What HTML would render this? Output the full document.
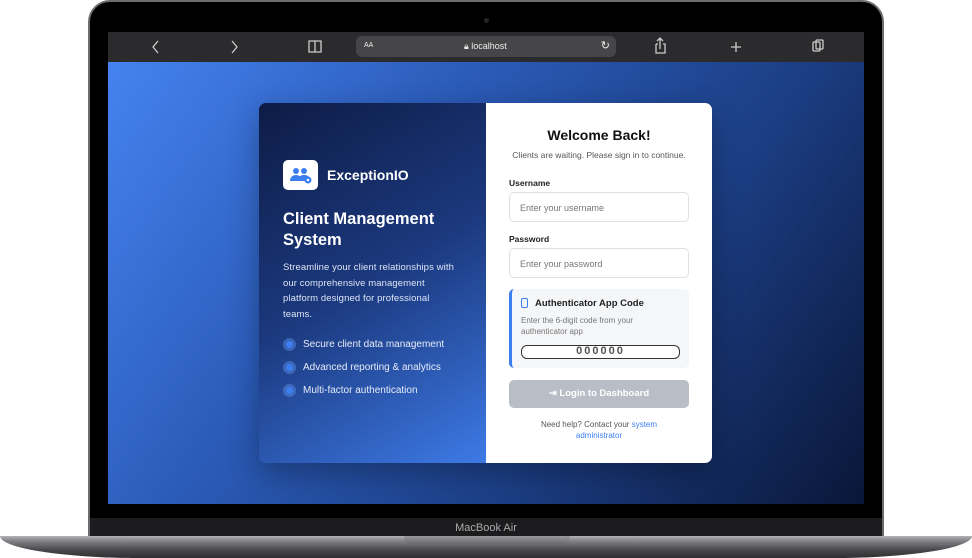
<!DOCTYPE html>
<html><head><style>
*{margin:0;padding:0;box-sizing:border-box}
body{width:972px;height:558px;background:#fff;position:relative;overflow:hidden;font-family:"Liberation Sans",sans-serif}
.lid{position:absolute;left:88px;top:0;width:796px;height:540px;background:#000;border-radius:22px 22px 0 0;border:2px solid #6c6c70}
.cam{position:absolute;left:484px;top:18px;width:5px;height:5px;border-radius:50%;background:#222}
.bar{position:absolute;left:108px;top:32px;width:756px;height:30px;background:#2b2b2d;color:#ddd}
.url{position:absolute;left:248px;top:4px;width:260px;height:21px;background:#464648;border-radius:6px;font-size:9px;color:#eee}
.screen{position:absolute;left:108px;top:62px;width:756px;height:442px;background:linear-gradient(125deg,#4583f0 0%,#2b5bb8 35%,#1c3f86 65%,#0a1638 100%)}
.chin{position:absolute;left:90px;top:518px;width:792px;height:20px;background:#1c1c1e;color:#aaa;font-size:11px;text-align:center;line-height:20px}
.base{position:absolute;left:0;top:536px;width:972px;height:22px;background:linear-gradient(#b4b4b8 0,#8a8a8e 4px,#4c4c50 60%,#2e2e31 100%);border-radius:0 0 140px 140px/0 0 22px 22px}
.notch{position:absolute;left:404px;top:536px;width:166px;height:8px;background:linear-gradient(#9a9a9e,#6a6a6e);border-radius:0 0 8px 8px}
.card{position:absolute;left:259px;top:103px;width:453px;height:360px;border-radius:7px;overflow:hidden;box-shadow:0 10px 30px rgba(0,0,0,.3)}
.left{position:absolute;left:0;top:0;width:227px;height:360px;background:linear-gradient(150deg,#0d1b45 0%,#1c3a80 50%,#3d7ae6 100%);color:#fff}
.right{position:absolute;left:227px;top:0;width:226px;height:360px;background:#fff;color:#111}
.logo{position:absolute;left:24px;top:57px;width:35px;height:30px;background:#fff;border-radius:5px}
.feat{position:absolute;left:24px;font-size:10px;color:#e6ecf8}
.feat i{display:inline-block;width:13px;height:13px;border-radius:50%;background:rgba(90,140,230,.5);vertical-align:middle;margin-right:7px;position:relative}
.feat i:after{content:"";position:absolute;left:3px;top:3px;width:7px;height:7px;border-radius:50%;background:#3b7ef0}
label{position:absolute;left:23px;font-size:8.5px;font-weight:bold;color:#222}
.inp{position:absolute;left:23px;width:180px;height:30px;border:1px solid #dde0e5;border-radius:5px;font-size:9px;color:#777;padding:10px 0 0 10px}
</style></head><body>
<div class="lid"></div>
<div class="cam"></div>
<div class="bar">
<svg width="756" height="30" style="position:absolute;left:0;top:0" fill="none" stroke="#ccc" stroke-width="1.3">
<path d="M50 9l-5 6 5 6M124 9l5 6-5 6"/>
<path d="M201 9h6v11h-6zM207 9h6v11h-6z"/>
<path d="M548 12v9h9v-9h-2M550 12h-2M552 17v-11M549 9l3-3 3 3"/>
<path d="M628 10v10M623 15h10"/>
<rect x="705" y="10" width="7" height="9" rx="1"/><rect x="708" y="8" width="7" height="9" rx="1"/>
</svg>
<div class="url"><span style="position:absolute;left:8px;top:6px;font-size:7px">AA</span><span style="position:absolute;left:108px;top:5px">🔒︎ localhost</span><span style="position:absolute;right:6px;top:3px;font-size:11px">↻</span></div>
</div>
<div class="screen"></div>
<div class="chin">MacBook Air</div>
<div class="base"></div><div class="notch"></div>
<div class="card">
<div class="left">
<div class="logo"><svg width="35" height="30"><g fill="#3b7ef0"><circle cx="13" cy="11" r="3"/><circle cx="21" cy="11" r="3"/><path d="M7 21c0-4 3-6 6-6s5 2 5 4v2zM16 21v-2c0-3 2-4 5-4s5 1 5 3v3z"/><circle cx="25" cy="20" r="3.5"/></g><circle cx="25" cy="20" r="1.3" fill="#fff"/></svg></div>
<div style="position:absolute;left:68px;top:64px;font-size:14px;font-weight:bold">ExceptionIO</div>
<div style="position:absolute;left:24px;top:106px;font-size:16.5px;font-weight:bold;line-height:21px">Client Management<br>System</div>
<div style="position:absolute;left:24px;top:157px;font-size:9.5px;line-height:15.5px;color:#dde5f5;width:200px;white-space:nowrap;letter-spacing:.1px">Streamline your client relationships with<br>our comprehensive management<br>platform designed for professional<br>teams.</div>
<div class="feat" style="top:235px"><i></i>Secure client data management</div>
<div class="feat" style="top:258px"><i></i>Advanced reporting &amp; analytics</div>
<div class="feat" style="top:281px"><i></i>Multi-factor authentication</div>
</div>
<div class="right">
<div style="position:absolute;left:0;width:226px;top:24px;text-align:center;font-size:14px;font-weight:bold;color:#111">Welcome Back!</div>
<div style="position:absolute;left:0;width:226px;top:47px;text-align:center;font-size:8.5px;color:#555">Clients are waiting. Please sign in to continue.</div>
<label style="top:75px">Username</label>
<div class="inp" style="top:89px">Enter your username</div>
<label style="top:131px">Password</label>
<div class="inp" style="top:145px">Enter your password</div>
<div style="position:absolute;left:23px;top:186px;width:180px;height:79px;background:#f5f6f8;border-left:3px solid #3b7ef0;border-radius:5px">
<div style="position:absolute;left:9px;top:9px;width:7px;height:10px;border:1.5px solid #3b7ef0;border-radius:2px"></div>
<div style="position:absolute;left:23px;top:9px;font-size:9.5px;font-weight:bold;color:#222">Authenticator App Code</div>
<div style="position:absolute;left:9px;top:27px;font-size:8px;line-height:10.5px;color:#777;width:150px">Enter the 6-digit code from your authenticator app</div>
<div style="position:absolute;left:9px;top:56px;width:159px;height:14px;border:1.5px solid #333;border-radius:6px;background:#fff;text-align:center;font-size:11px;font-weight:bold;letter-spacing:2px;color:#555;line-height:11px">000000</div>
</div>
<div style="position:absolute;left:23px;top:277px;width:180px;height:28px;background:#b9bec6;border-radius:5px;color:#fff;font-size:9.5px;font-weight:bold;text-align:center;line-height:28px">⇥ Login to Dashboard</div>
<div style="position:absolute;left:0;width:226px;top:317px;text-align:center;font-size:8px;line-height:10.5px;color:#555">Need help? Contact your <span style="color:#3b7ef0">system<br>administrator</span></div>
</div>
</div>
</body></html>
